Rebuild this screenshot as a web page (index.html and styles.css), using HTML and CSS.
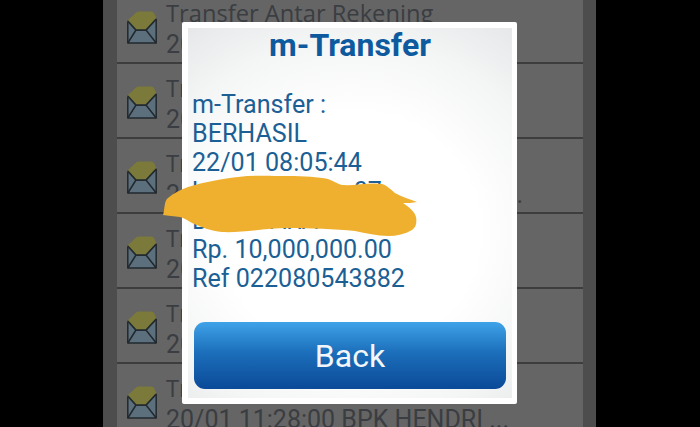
FILE: index.html
```html
<!DOCTYPE html>
<html lang="id">
<head>
<meta charset="utf-8">
<title>m-Transfer</title>
<link rel="stylesheet" href="styles.css">
</head>
<body>
<svg width="0" height="0" class="defs" aria-hidden="true">
  <symbol id="mail" viewBox="0 0 30 34">
    <path d="M0.8 11V33H29.2V9L19 20H9Z" fill="#5b6f7c" stroke="#22292e" stroke-width="1.5" stroke-linejoin="round"/>
    <path d="M0.8 33L9 20M29.2 33L19 20" stroke="#22292e" stroke-width="1.5" fill="none"/>
    <path d="M0 11L9 2.5Q10 1.5 12 1.5H24Q26 1.5 27 3L29.5 8.5L19 20H9Z" fill="#7b7a3a"/>
    <path d="M0.8 11L9 20H19L29.2 9" stroke="#22292e" stroke-width="1.5" fill="none"/>
  </symbol>
</svg>
<main class="screen">
  <ul class="list">
    <li class="row"><svg class="icon"><use href="#mail"/></svg><div class="row-text"><p class="subject">Transfer Antar Rekening</p><p>20/01 11:28:00 BPK HENDRI ...</p></div></li>
    <li class="row"><svg class="icon"><use href="#mail"/></svg><div class="row-text"><p class="subject">Transfer Antar Rekening</p><p>20/01 11:28:00 BPK HENDRI ...</p></div></li>
    <li class="row"><svg class="icon"><use href="#mail"/></svg><div class="row-text"><p class="subject">Transfer Antar Rekening</p><p class="long">20/01 11:28:00 BPK HENDRI ...</p></div></li>
    <li class="row"><svg class="icon"><use href="#mail"/></svg><div class="row-text"><p class="subject">Transfer Antar Rekening</p><p>20/01 11:28:00 BPK HENDRI ...</p></div></li>
    <li class="row"><svg class="icon"><use href="#mail"/></svg><div class="row-text"><p class="subject">Transfer Antar Rekening</p><p>20/01 11:28:00 BPK HENDRI ...</p></div></li>
    <li class="row"><svg class="icon"><use href="#mail"/></svg><div class="row-text"><p class="subject">Transfer Antar Rekening</p><p>20/01 11:28:00 BPK HENDRI ...</p></div></li>
  </ul>
</main>
<section class="dialog">
  <div class="dialog-inner">
    <h1>m-Transfer</h1>
    <div class="message">
      <p>m-Transfer :</p>
      <p>BERHASIL</p>
      <p>22/01 08:05:44</p>
      <p>l&nbsp;&nbsp;&nbsp;&nbsp;&nbsp;&nbsp;&nbsp;&nbsp;&nbsp;&nbsp;&nbsp;&nbsp;&nbsp;&nbsp;&nbsp;&nbsp;&nbsp;&nbsp;&nbsp;&nbsp;&nbsp;&nbsp;&nbsp;&nbsp;&nbsp;07</p>
      <p>B&nbsp;&nbsp;&nbsp;&nbsp;&nbsp;&nbsp;&nbsp;&nbsp;&nbsp;&nbsp;ARA</p>
      <p>Rp. 10,000,000.00</p>
      <p>Ref 022080543882</p>
    </div>
    <button class="back" type="button">Back</button>
  </div>
</section>
<svg class="blob" viewBox="0 0 700 427" aria-hidden="true">
  <path d="M163 215C165 208 164 201 168 198C174 193 180 190 188 187C205 182 220 179 238 177C255 175 270 176 288 176C305 176 318 177 328 179C334 181 338 184 342 185C355 186 370 182 382 184C388 186 391 190 395 193C402 197 410 199 417 202C412 203 408 203 403 203C410 208 415 212 416 217C417 223 416 227 412 230C405 234 397 236 388 236C377 236 366 233 355 231C335 229 310 228 288 228C265 228 243 233 222 232C211 231 201 227 192 223C187 220 184 218 180 217C174 216 168 216 163 215Z" fill="#f0b02f"/>
</svg>
</body>
</html>
```
FILE: styles.css
```css
html, body {
  margin: 0;
  height: 427px;
  overflow: hidden;
  background: #000;
  font-family: Roboto, "Liberation Sans", sans-serif;
}
.defs { display: block; height: 0; }
.screen {
  width: 493px;
  height: 427px;
  margin-left: 103px;
  padding: 0 13px 0 14px;
  box-sizing: border-box;
  background: #4d4d4d;
  overflow: hidden;
}
.list {
  list-style: none;
  margin: -11px 0 0;
  padding: 0;
}
.row {
  display: flex;
  align-items: flex-start;
  gap: 9px;
  height: 75px;
  box-sizing: border-box;
  padding: 8px 0 0 10px;
  background: #656565;
  border-bottom: 2px solid #3d3d3d;
}
.icon {
  flex: none;
  width: 30px;
  height: 34px;
  margin-top: 13px;
}
.row-text p {
  margin: 0;
  font-size: 25px;
  line-height: 30px;
  color: #3a3d41;
  white-space: nowrap;
}
.row-text .subject {
  font-family: "Open Sans", Roboto, sans-serif;
  font-size: 23.7px;
  line-height: 33px;
}
.row-text .long { letter-spacing: 0.5px; }
.dialog {
  position: absolute;
  left: 182px;
  top: 22px;
  width: 335px;
  height: 382px;
  box-sizing: border-box;
  padding: 6px 5px 6px 6px;
  background: #fff;
  border-radius: 2px;
}
.dialog-inner {
  height: 100%;
  box-sizing: border-box;
  padding: 0 6px 9px;
  display: flex;
  flex-direction: column;
  background: radial-gradient(ellipse 80% 65% at 50% 55%, #fff 50%, #f4f5f5 80%, #e2e4e6 112%);
}
h1 {
  margin: 0;
  font-size: 32px;
  font-weight: 700;
  line-height: 35px;
  text-align: center;
  color: #0e5a9f;
}
.message {
  margin: 27px 0 0 -2px;
  font-size: 25.1px;
  line-height: 29px;
  color: #1b5f95;
}
.message p { margin: 0; white-space: nowrap; }
.back {
  margin-top: auto;
  height: 67px;
  width: 312px;
  padding: 0;
  border: 0;
  border-radius: 11px;
  background: linear-gradient(#3fa3e8, #1c6fbb 45%, #0a4a98 100%);
  color: #f2f6fa;
  font: 400 32px Roboto, "Liberation Sans", sans-serif;
}
.blob {
  position: absolute;
  left: 0;
  top: 0;
  width: 700px;
  height: 427px;
  pointer-events: none;
}
```
